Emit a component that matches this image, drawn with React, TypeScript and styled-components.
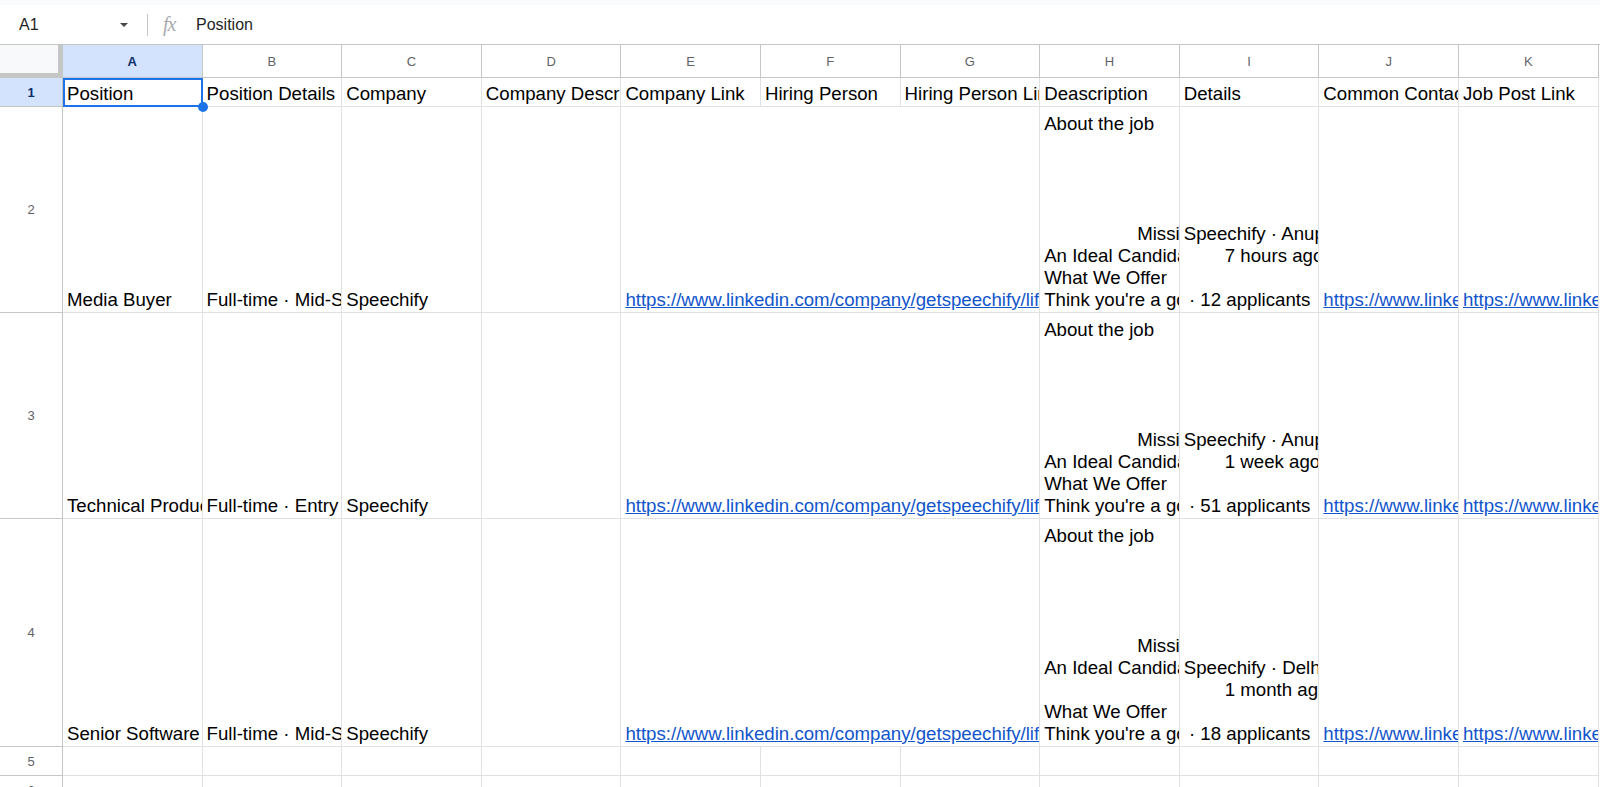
import React from 'react'
import styled, { createGlobalStyle } from 'styled-components'

const GlobalStyle = createGlobalStyle`
    html, body {
        margin: 0;
        padding: 0;
        background: #ffffff;
        overflow: hidden;
    }
    body {
        font-family: "Liberation Sans", Arial, sans-serif;
        color: #000000;
    }
`

const Page = styled.div`
    width: 1600px;
    height: 787px;
    overflow: hidden;
`
const TopStrip = styled.div`
    height: 5px;
    background: #f9fbfd;
`
const FormulaBar = styled.div`
    height: 39px;
    display: flex;
    align-items: center;
    background: #ffffff;
    font-size: 16px;
    color: #1f1f1f;
`
const NameBox = styled.div`
    width: 131px;
    box-sizing: border-box;
    padding: 0 3px 0 19px;
    display: flex;
    align-items: center;
    justify-content: space-between;
`
const Caret = styled.span`
    width: 0;
    height: 0;
    border-left: 4px solid transparent;
    border-right: 4px solid transparent;
    border-top: 4px solid #444746;
`
const Divider = styled.div`
    width: 1px;
    height: 22px;
    margin-left: 16px;
    background: #c4c7c5;
`
const Fx = styled.span`
    margin-left: 15px;
    width: 20px;
    font-family: "Liberation Serif", serif;
    font-style: italic;
    font-size: 20px;
    color: #a8abad;
    letter-spacing: -1px;
`
const FormulaText = styled.span`
    margin-left: 13px;
`

const Sheet = styled.div`
    display: grid;
    grid-template-columns: 63px repeat(11, 139.6px);
    grid-template-rows: 33px 29px 206px 206px 228px 29px 29px;
    border-top: 1px solid #c4c7c5;
`
const Corner = styled.div`
    box-sizing: border-box;
    background: #f8f9fa;
    border-right: 5px solid #c4c7c5;
    border-bottom: 5px solid #c4c7c5;
`
const HeadCell = styled.div<{ $active?: boolean }>`
    box-sizing: border-box;
    display: flex;
    align-items: center;
    justify-content: center;
    border-right: 1px solid #c4c7c5;
    border-bottom: 1px solid #c4c7c5;
    background: ${p => (p.$active ? '#d3e3fd' : '#ffffff')};
    color: ${p => (p.$active ? '#0b2e6b' : '#5f6368')};
    font-weight: ${p => (p.$active ? 700 : 400)};
    font-size: 13px;
`
const Cell = styled.div<{ $span?: number; $selected?: boolean }>`
    box-sizing: border-box;
    position: relative;
    z-index: ${p => (p.$selected ? 2 : 0)};
    grid-column: span ${p => p.$span || 1};
    display: flex;
    flex-direction: column;
    justify-content: flex-end;
    min-width: 0;
    padding: 0 0 1px 4px;
    border-right: 1px solid #e1e1e1;
    border-bottom: 1px solid #e1e1e1;
    font-size: 18.67px;
    line-height: 22px;
    ${p =>
        p.$selected &&
        `
        &::before {
            content: '';
            position: absolute;
            left: 0;
            top: 0;
            right: -1px;
            bottom: -1px;
            border: 2px solid #1a73e8;
        }
        &::after {
            content: '';
            position: absolute;
            right: -6px;
            bottom: -6px;
            width: 10px;
            height: 10px;
            border-radius: 50%;
            background: #1a73e8;
        }
    `}
`
const Line = styled.div<{ $indent?: number }>`
    height: 22px;
    flex-shrink: 0;
    white-space: pre;
    overflow: hidden;
    padding-left: ${p => p.$indent || 0}px;
`
const Link = styled.a`
    color: #1155cc;
    text-decoration: underline;
`

type TextLine = { t: string; indent?: number }

type Job = {
    n: number
    position: string
    details: string
    company: string
    desc: TextLine[]
    info: TextLine[]
}

const blank: TextLine = { t: '' }

const shortDesc: TextLine[] = [
    { t: 'About the job' },
    blank,
    blank,
    blank,
    blank,
    { t: 'Mission', indent: 93 },
    { t: 'An Ideal Candidate' },
    { t: 'What We Offer' },
    { t: "Think you're a good fit?" },
]

const longDesc: TextLine[] = [
    { t: 'About the job' },
    blank,
    blank,
    blank,
    blank,
    { t: 'Mission', indent: 93 },
    { t: 'An Ideal Candidate' },
    blank,
    { t: 'What We Offer' },
    { t: "Think you're a good fit?" },
]

const jobs: Job[] = [
    {
        n: 2,
        position: 'Media Buyer',
        details: 'Full-time · Mid-Senior level',
        company: 'Speechify',
        desc: shortDesc,
        info: [
            { t: 'Speechify · Anupshahr, Uttar Pradesh, India' },
            { t: '7 hours ago', indent: 41 },
            blank,
            { t: ' · 12 applicants' },
        ],
    },
    {
        n: 3,
        position: 'Technical Product Manager',
        details: 'Full-time · Entry level',
        company: 'Speechify',
        desc: shortDesc,
        info: [
            { t: 'Speechify · Anupshahr, Uttar Pradesh, India' },
            { t: '1 week ago', indent: 41 },
            blank,
            { t: ' · 51 applicants' },
        ],
    },
    {
        n: 4,
        position: 'Senior Software Engineer',
        details: 'Full-time · Mid-Senior level',
        company: 'Speechify',
        desc: longDesc,
        info: [
            { t: 'Speechify · Delhi, India' },
            { t: '1 month ago', indent: 41 },
            blank,
            { t: ' · 18 applicants' },
        ],
    },
]

const columns = ['A', 'B', 'C', 'D', 'E', 'F', 'G', 'H', 'I', 'J', 'K']

const titles = [
    'Position',
    'Position Details',
    'Company',
    'Company Description',
    'Company Link',
    'Hiring Person',
    'Hiring Person Link',
    'Deascription',
    'Details',
    'Common Contact',
    'Job Post Link',
]

const Lines = ({ items }: { items: TextLine[] }) => (
    <>
        {items.map((l, i) => (
            <Line key={i} $indent={l.indent}>
                {l.t}
            </Line>
        ))}
    </>
)

const App = () => {
    return (
        <Page>
            <GlobalStyle />
            <TopStrip />
            <FormulaBar>
                <NameBox>
                    <span>A1</span>
                    <Caret />
                </NameBox>
                <Divider />
                <Fx>fx</Fx>
                <FormulaText>Position</FormulaText>
            </FormulaBar>
            <Sheet>
                <Corner />
                {columns.map(c => (
                    <HeadCell key={c} $active={c === 'A'}>
                        {c}
                    </HeadCell>
                ))}

                <HeadCell $active>1</HeadCell>
                {titles.map((t, i) => (
                    <Cell key={t} $selected={i === 0}>
                        <Line>{t}</Line>
                    </Cell>
                ))}

                {jobs.map(job => (
                    <React.Fragment key={job.n}>
                        <HeadCell>{job.n}</HeadCell>
                        <Cell>
                            <Line>{job.position}</Line>
                        </Cell>
                        <Cell>
                            <Line>{job.details}</Line>
                        </Cell>
                        <Cell>
                            <Line>{job.company}</Line>
                        </Cell>
                        <Cell />
                        <Cell $span={3}>
                            <Line>
                                <Link href="#">https://www.linkedin.com/company/getspeechify/life/</Link>
                            </Line>
                        </Cell>
                        <Cell>
                            <Lines items={job.desc} />
                        </Cell>
                        <Cell>
                            <Lines items={job.info} />
                        </Cell>
                        <Cell>
                            <Line>
                                <Link href="#">https://www.linkedin.com/search/results/people/</Link>
                            </Line>
                        </Cell>
                        <Cell>
                            <Line>
                                <Link href="#">https://www.linkedin.com/jobs/view/</Link>
                            </Line>
                        </Cell>
                    </React.Fragment>
                ))}

                {[5, 6].map(n => (
                    <React.Fragment key={n}>
                        <HeadCell>{n}</HeadCell>
                        {columns.map(c => (
                            <Cell key={c} />
                        ))}
                    </React.Fragment>
                ))}
            </Sheet>
        </Page>
    )
}

export default App
